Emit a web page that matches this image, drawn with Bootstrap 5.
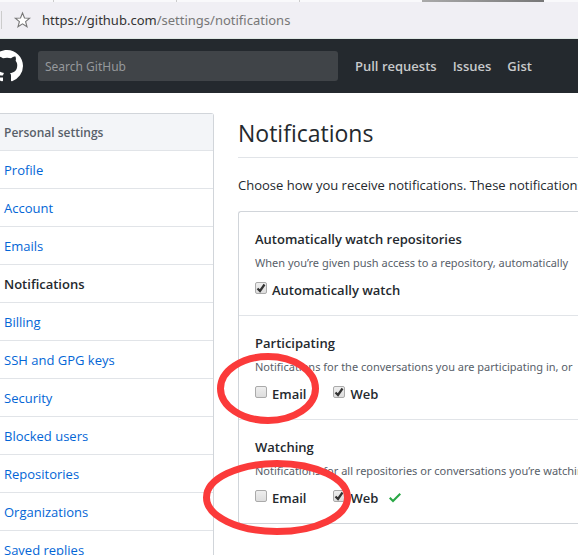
<!DOCTYPE html>
<html lang="en">
<head>
<meta charset="utf-8">
<meta name="viewport" content="width=device-width, initial-scale=1">
<title>Notifications</title>
<link rel="stylesheet" href="https://cdn.jsdelivr.net/npm/bootstrap@5.3.0/dist/css/bootstrap.min.css">
<style>
body{font-family:"Open Sans","Noto Sans",sans-serif;font-size:13px;line-height:20px;color:#24292e;background:#fff}
.page{height:100vh}
.tabstrip{height:2px;background:#f9f9fb}
.tabstrip i{width:123px;height:2px;border-left:1px solid #ccc}
.tabstrip i:first-child{width:53px;border:0}
.tabstrip span{width:122px;height:2px;background:linear-gradient(90deg,#aaa,#777)}
.address{height:37px;background:#f0eff4;border-bottom:1px solid #dfe8e4;gap:11px;padding-left:1px;font-family:"Noto Sans",sans-serif}
.address .divider{width:1px;height:18px;background:#ccc}
.address a{color:#333}
.address a span{color:#777}
.site-header{height:54px;background:#24292e}
.logo{margin-left:-9px;width:32px;height:32px}
.search-box{width:300px;height:30px;margin-left:15px;padding:0 7px;border:0;border-radius:3px;background:#404448;color:#fff;font-family:"Noto Sans",sans-serif;font-size:12px}
.search-box:focus{background:#404448;color:#fff}
.search-box::placeholder{color:#96999c}
.site-links{margin-left:17px;gap:16px}
.site-links a{color:#c8c9cb;font-weight:600}
.content-row{padding-top:20px;gap:24px}
.settings-menu{width:214px;border:1px solid #d1d5da;border-left:0;border-radius:0 3px 3px 0}
.settings-menu>*{height:38px;padding:9px 4px 8px;border-bottom:1px solid #e1e4e8;color:#0366d6}
.settings-menu h2{height:37px;background:#f3f5f8;color:#586069;font-size:12px;font-weight:600;line-height:20px}
.settings-menu .current{color:#24292e;font-weight:600}
.page-title{font-size:23px;line-height:36px;font-weight:400;padding:2px 0 6px;border-bottom:1px solid #e1e4e8}
.intro{margin:17px 0 16px}
.options{border:1px solid #d1d5da;border-right:0;border-radius:3px 0 0 3px}
.options section{padding:17px 16px 15px}
.options section+section{border-top:1px solid #e1e4e8}
.options h3{font-size:13px;line-height:20px;font-weight:600;margin:0}
.options p{font-family:"Noto Sans",sans-serif;font-size:11px;line-height:20px;margin:4px 0 7px;color:#586069}
.choices{gap:27px}
.choices label{gap:5px;font-weight:600}
.tick{appearance:none;width:12px;height:12px;margin:0 0 4px;border:1px solid #aaa;border-radius:2px;background:linear-gradient(#eee,#ddd)}
.tick:checked{background:url("data:image/svg+xml,%3Csvg xmlns='http://www.w3.org/2000/svg' viewBox='0 0 10 10'%3E%3Cpath d='M1.5 5.5 4 8 8.5 1.5' fill='none' stroke='%23333' stroke-width='2.2'/%3E%3C/svg%3E") center/10px no-repeat,linear-gradient(#eee,#ddd)}
.saved{width:12px;height:10px;margin-left:-16px}
.ring{pointer-events:none;z-index:1}
.ring-a{width:102px;height:71px;left:-22px;top:37px}
.ring-b{width:148px;height:75px;left:-36px;top:40px}
</style>
</head>
<body>
<div class="page d-flex flex-column overflow-hidden text-nowrap">
  <div class="tabstrip d-flex flex-shrink-0"><i></i><i></i><i></i><i></i><span></span></div>
  <div class="address d-flex align-items-center flex-shrink-0">
    <div class="divider"></div>
    <svg width="18" height="18" viewBox="0 0 18 18" aria-hidden="true"><path d="M9.500 2l2 5 5.200.2-4.100 3.500 1.400 5.100-4.500-2.900L5 15.800l1.400-5.100-4.100-3.500 5.200-.2z" fill="#fff" stroke="#777" stroke-width="1.100"/></svg>
    <a class="text-decoration-none" href="#">https://github.com<span>/settings/notifications</span></a>
  </div>
  <header class="site-header d-flex align-items-center flex-shrink-0">
    <svg class="logo flex-shrink-0" viewBox="0 0 16 16" fill="#fff" role="img" aria-label="GitHub"><path fill-rule="evenodd" d="M8 0C3.580 0 0 3.580 0 8c0 3.540 2.290 6.530 5.470 7.590.4.070.55-.17.55-.38 0-.19-.01-.82-.01-1.490-2.010.37-2.530-.49-2.690-.94-.09-.23-.48-.94-.82-1.130-.28-.15-.68-.52-.01-.53.63-.01 1.080.58 1.230.82.72 1.210 1.870.87 2.330.66.07-.52.28-.87.51-1.070-1.780-.2-3.640-.89-3.640-3.950 0-.87.31-1.590.82-2.150-.08-.2-.36-1.020.08-2.120 0 0 .67-.21 2.200.82.64-.18 1.320-.27 2-.27s1.360.09 2 .27c1.530-1.040 2.200-.82 2.200-.82.44 1.100.16 1.920.08 2.120.51.56.82 1.270.82 2.150 0 3.070-1.870 3.750-3.650 3.950.29.25.54.73.54 1.480 0 1.070-.01 1.930-.01 2.200 0 .21.15.46.55.38A8.010 8.010 0 0 0 16 8c0-4.420-3.580-8-8-8z"/></svg>
    <input class="search-box form-control flex-shrink-0" type="search" placeholder="Search GitHub" aria-label="Search GitHub">
    <nav class="site-links d-flex">
      <a class="text-decoration-none" href="#">Pull requests</a>
      <a class="text-decoration-none" href="#">Issues</a>
      <a class="text-decoration-none" href="#">Gist</a>
    </nav>
  </header>
  <div class="content-row d-flex align-items-start">
    <nav class="settings-menu d-flex flex-column flex-shrink-0">
      <h2 class="m-0">Personal settings</h2>
      <a class="text-decoration-none" href="#">Profile</a>
      <a class="text-decoration-none" href="#">Account</a>
      <a class="text-decoration-none" href="#">Emails</a>
      <a class="text-decoration-none current" href="#" aria-current="page">Notifications</a>
      <a class="text-decoration-none" href="#">Billing</a>
      <a class="text-decoration-none" href="#">SSH and GPG keys</a>
      <a class="text-decoration-none" href="#">Security</a>
      <a class="text-decoration-none" href="#">Blocked users</a>
      <a class="text-decoration-none" href="#">Repositories</a>
      <a class="text-decoration-none" href="#">Organizations</a>
      <a class="text-decoration-none" href="#">Saved replies</a>
    </nav>
    <main class="flex-grow-1">
      <h1 class="page-title m-0">Notifications</h1>
      <p class="intro">Choose how you receive notifications. These notifications</p>
      <div class="options">
        <section>
          <h3>Automatically watch repositories</h3>
          <p>When you’re given push access to a repository, automatically</p>
          <div class="choices d-flex">
            <label class="d-flex align-items-center"><input class="tick" type="checkbox" checked>Automatically watch</label>
          </div>
        </section>
        <section class="position-relative">
          <h3>Participating</h3>
          <p>Notifications for the conversations you are participating in, or</p>
          <div class="choices d-flex">
            <label class="d-flex align-items-center"><input class="tick" type="checkbox">Email</label>
            <label class="d-flex align-items-center"><input class="tick" type="checkbox" checked>Web</label>
          </div>
          <svg class="ring ring-a position-absolute" viewBox="0 0 102 71" aria-hidden="true"><ellipse cx="51" cy="35.500" rx="47.500" ry="32" fill="none" stroke="#fb3a3a" stroke-width="7"/></svg>
        </section>
        <section class="position-relative">
          <h3>Watching</h3>
          <p>Notifications for all repositories or conversations you’re watching</p>
          <div class="choices d-flex align-items-center">
            <label class="d-flex align-items-center"><input class="tick" type="checkbox">Email</label>
            <label class="d-flex align-items-center"><input class="tick" type="checkbox" checked>Web</label>
            <svg class="saved" viewBox="0 0 12 10" aria-label="Saved"><path d="M12 1.500 4 9.500 0 5.500 1.500 4 4 6.500 10.500 0z" fill="#28a745"/></svg>
          </div>
          <svg class="ring ring-b position-absolute" viewBox="0 0 148 75" aria-hidden="true"><ellipse cx="74" cy="37.500" rx="70.500" ry="34" fill="none" stroke="#fb3a3a" stroke-width="7"/></svg>
        </section>
      </div>
    </main>
  </div>
</div>
<script src="https://cdn.jsdelivr.net/npm/bootstrap@5.3.0/dist/js/bootstrap.bundle.min.js"></script>
</body>
</html>
